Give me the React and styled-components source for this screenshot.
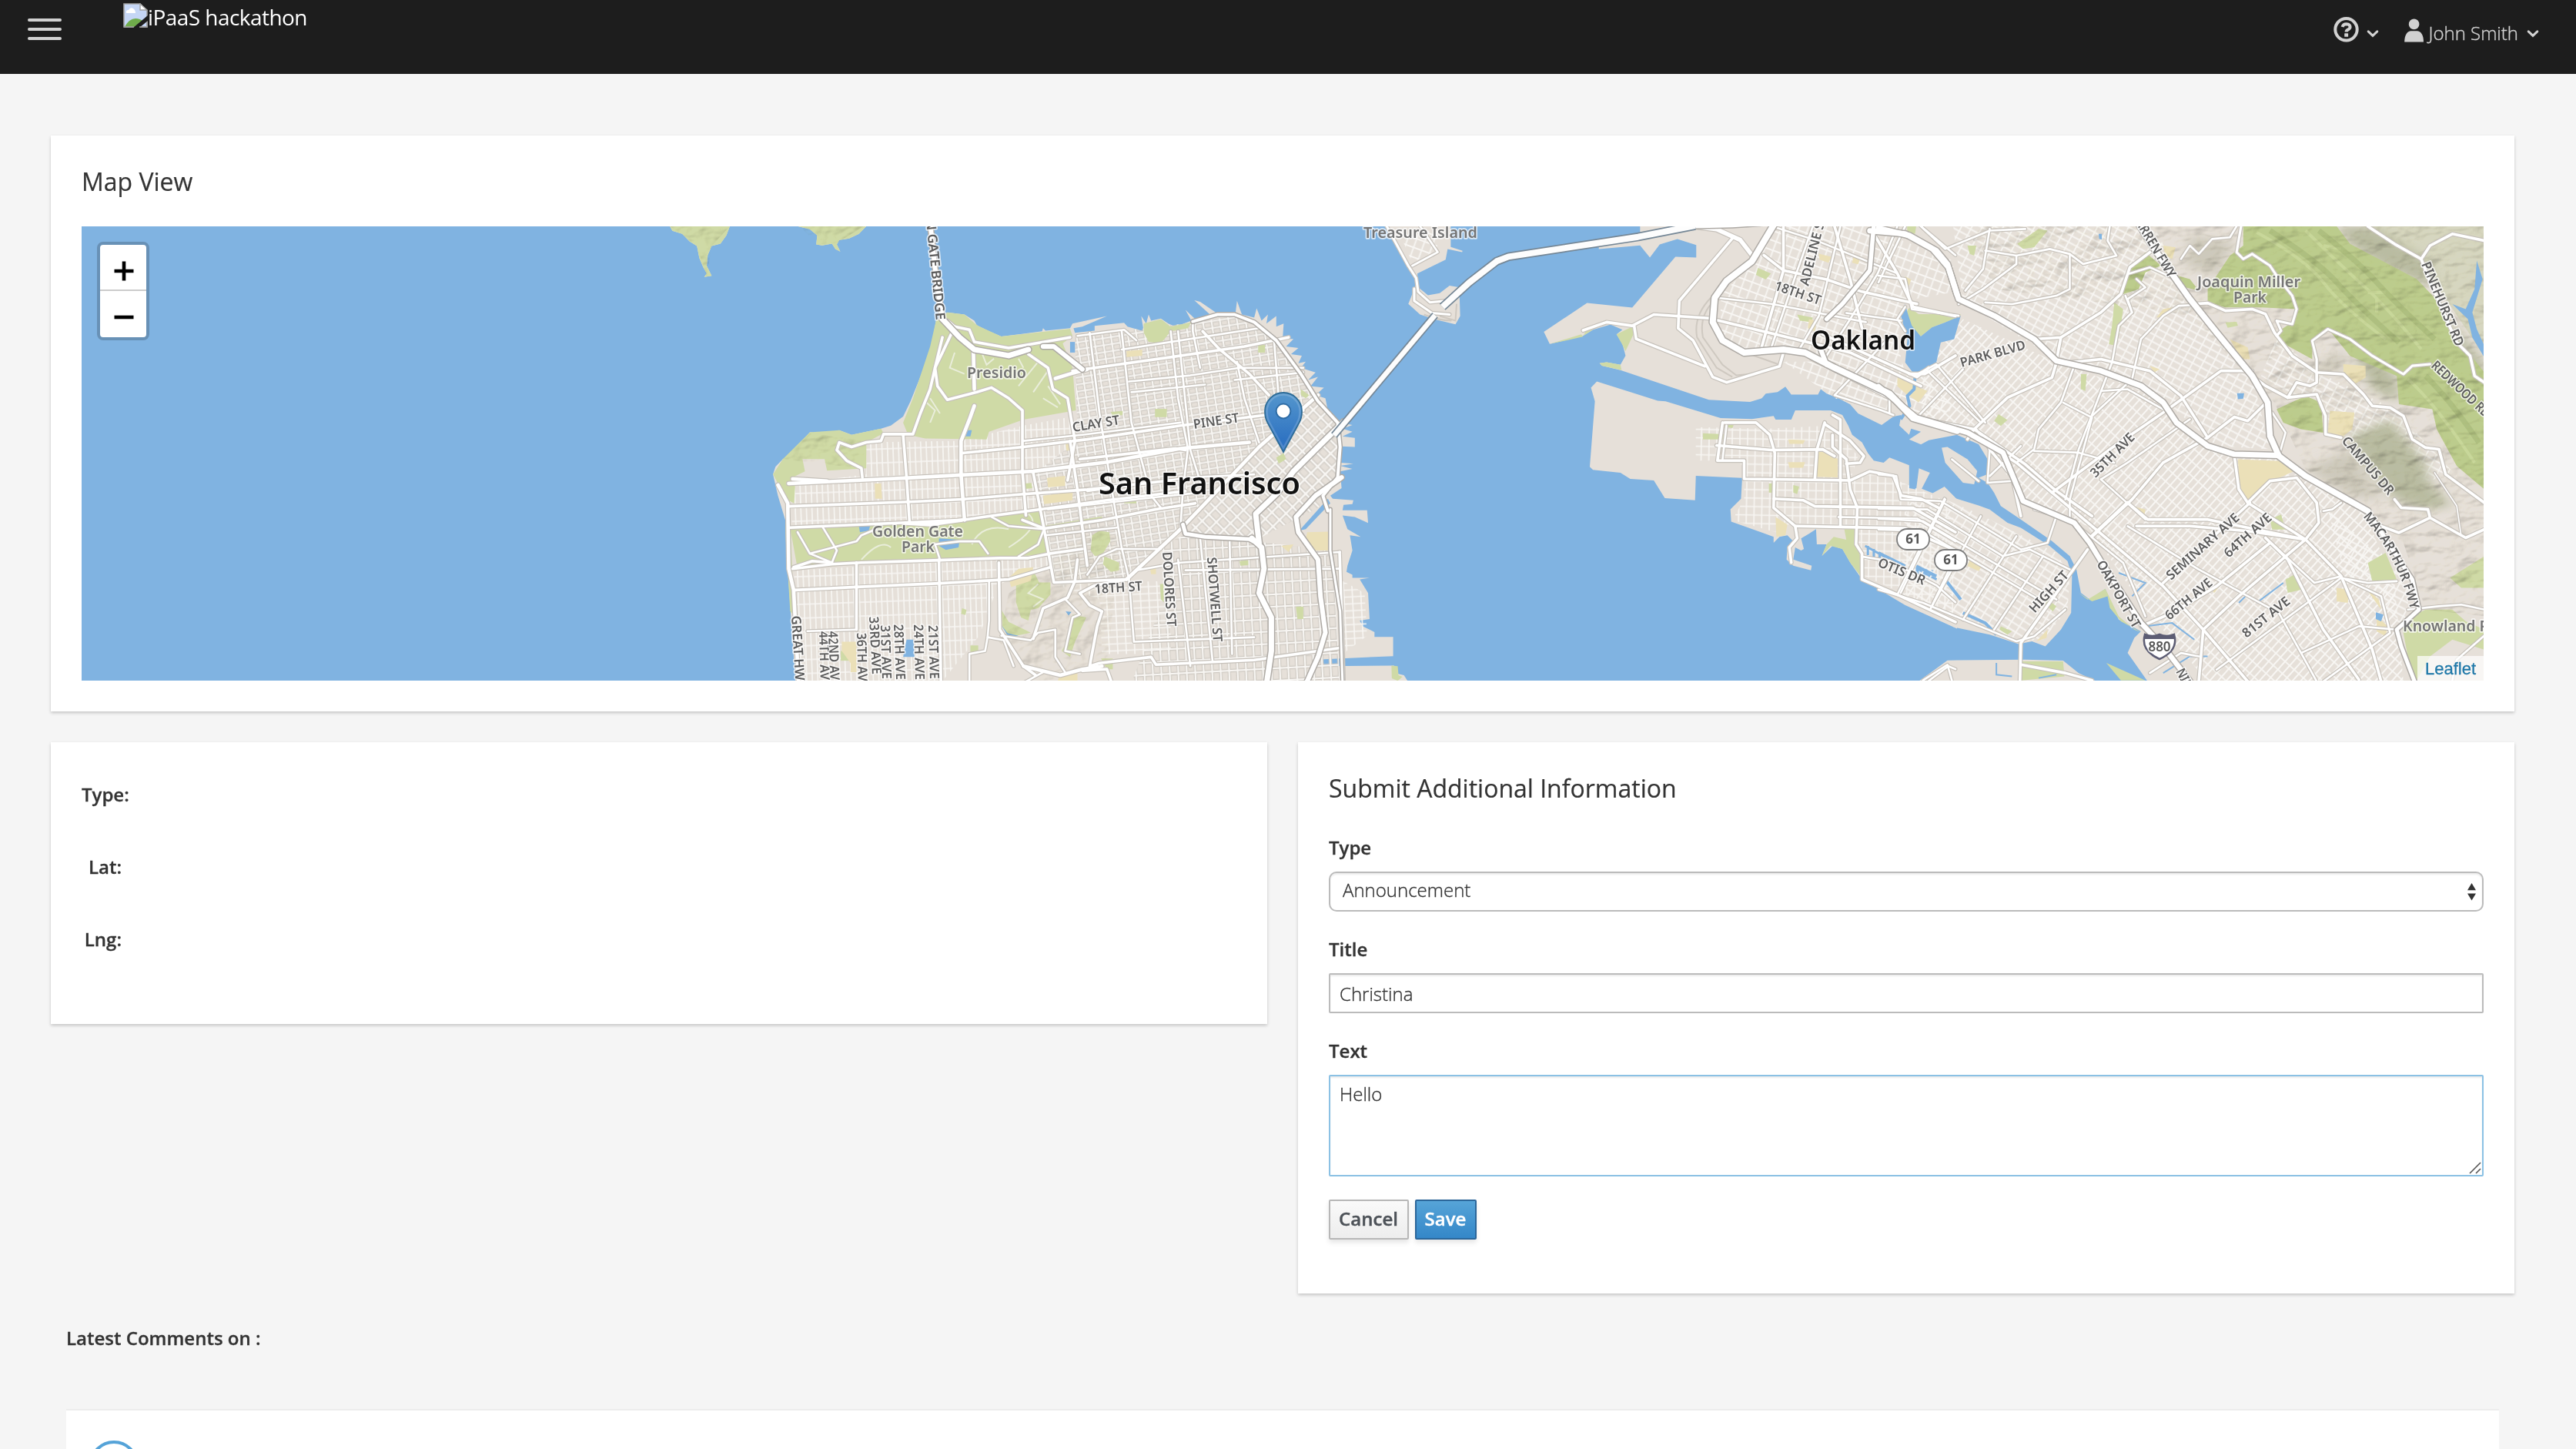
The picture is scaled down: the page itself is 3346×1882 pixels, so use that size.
import React from "react";
import styled, { createGlobalStyle, css } from "styled-components";

const GlobalStyle = createGlobalStyle`
  *, *::before, *::after { box-sizing: border-box; }
  html, body { margin: 0; padding: 0; background: #f5f5f5; overflow: hidden; }
  body { font-family: "Open Sans", "Noto Sans", sans-serif; font-size: 24px; line-height: 40px; color: #333; }
`;

/* ---------- page chrome ---------- */

const Page = styled.div`
  height: 100vh;
  overflow: hidden;
  display: flex;
  flex-direction: column;
`;

const Navbar = styled.header`
  flex: none;
  height: 96px;
  background: #1d1d1d;
  display: flex;
  align-items: flex-start;
  justify-content: space-between;
  padding: 0 48px 0 36px;
  color: #d1d1d1;
`;

const NavGroup = styled.div`
  display: flex;
  align-items: flex-start;
`;

const MenuToggle = styled.button`
  display: flex;
  flex-direction: column;
  gap: 8px;
  width: 44px;
  margin: 24px 80px 0 0;
  padding: 0;
  border: 0;
  background: none;
`;

const MenuBar = styled.span`
  height: 4px;
  border-radius: 2px;
  background: #d1d1d1;
`;

const Brand = styled.div`
  display: flex;
  align-items: flex-start;
  padding-top: 4px;
  color: #fff;
  font-size: 28px;
  line-height: 37px;
  letter-spacing: -0.55px;
`;

const HelpMenu = styled.div`
  display: flex;
  align-items: flex-start;
  padding-top: 22px;
  gap: 10px;
  margin-right: 33px;
`;

const UserMenu = styled.div`
  display: flex;
  align-items: flex-start;
  padding-top: 24px;
  font-weight: 300;
  -webkit-text-stroke: 0.35px;
`;

const UserName = styled.span`
  margin: 0 11px 0 6px;
  line-height: 38px;
`;

const ChevronIcon = styled.svg`
  margin-top: ${(p) => p.$top}px;
`;

const Content = styled.main`
  flex: none;
  display: flex;
  flex-direction: column;
  gap: 40px;
  padding: 80px 80px 0 66px;
`;

const Card = styled.section`
  background: #fff;
  border-top: 2px solid transparent;
  box-shadow: 0 2px 4px rgba(3, 3, 3, 0.2);
  padding: ${(p) => p.$pad || "38px 40px 40px"};
  height: ${(p) => p.$height}px;
`;

const CardTitle = styled.h2`
  margin: 0 0 38px;
  font-size: 32px;
  font-weight: 400;
  line-height: 40px;
  -webkit-text-stroke: 0.2px;
`;

const Columns = styled.div`
  display: grid;
  grid-template-columns: 1fr 1fr;
  gap: 40px;
  align-items: start;
`;

const Detail = styled.div`
  width: 52px;
  height: 94px;
  font-weight: 600;
  text-align: right;
  white-space: nowrap;
  -webkit-text-stroke: 0.3px;
`;

/* ---------- form ---------- */

const Field = styled.div`
  display: flex;
  flex-direction: column;
  margin-bottom: 30px;
`;

const Label = styled.label`
  font-weight: 600;
  line-height: 38px;
  margin-bottom: 12px;
  -webkit-text-stroke: 0.3px;
`;

const control = css`
  display: block;
  width: 100%;
  margin: 0;
  border: 2px solid #bbb;
  border-radius: 2px;
  background: #fff;
  color: #333;
  font: 300 24px/40px "Open Sans", "Noto Sans", sans-serif;
  -webkit-text-stroke: 0.35px;
  box-shadow: inset 0 2px 2px rgba(3, 3, 3, 0.075);
  outline: 0;
  appearance: none;
`;

const ControlWrap = styled.div`
  position: relative;
`;

const Select = styled.select`
  ${control}
  height: 52px;
  border-radius: 10px;
  padding: 2px 16px 6px;
`;

const Input = styled.input`
  ${control}
  height: 52px;
  padding: 4px 12px;
`;

const TextArea = styled.textarea`
  ${control}
  height: 132px;
  padding: 3px 12px;
  border-color: #8bc1e4;
  resize: none;
`;

const SelectArrows = styled.svg`
  position: absolute;
  right: 10px;
  top: 15px;
`;

const ResizeGrip = styled.svg`
  position: absolute;
  right: 3px;
  bottom: 3px;
`;

const Actions = styled.div`
  display: flex;
  gap: 8px;
`;

const Button = styled.button`
  height: 52px;
  width: ${(p) => p.$width}px;
  padding: 0 1px 2px 0;
  border: 2px solid ${(p) => (p.$primary ? "#2b669a" : "#b7b7b7")};
  border-radius: 2px;
  background: ${(p) =>
    p.$primary
      ? "linear-gradient(#56a4d8, #3487c8)"
      : "linear-gradient(#fafafa, #ededed)"};
  color: ${(p) => (p.$primary ? "#fff" : "#4d5258")};
  font: 600 24px/44px "Open Sans", "Noto Sans", sans-serif;
  -webkit-text-stroke: 0.4px;
  box-shadow: 0 4px 6px rgba(3, 3, 3, 0.1);
`;

/* ---------- comments ---------- */

const Comments = styled.section`
  padding: 0 20px;
  margin-top: -2px;
`;

const CommentsTitle = styled.div`
  font-weight: 600;
  line-height: 40px;
  margin-bottom: 72px;
  -webkit-text-stroke: 0.3px;
`;

const CommentList = styled.div`
  height: 160px;
  background: #fff;
  border-top: 2px solid #ededed;
  padding: 39px 30px;
`;

const Avatar = styled.div`
  width: 64px;
  height: 64px;
  border: 4px solid #55a3d8;
  border-radius: 50%;
`;

/* ---------- map ---------- */

const MapFrame = styled.div`
  position: relative;
  height: 590px;
  overflow: hidden;
  background: #80b3e1;
`;

const MapCanvas = styled.svg`
  display: block;
  width: 3120px;
  height: 590px;
`;

const ZoomControl = styled.div`
  position: absolute;
  left: 20px;
  top: 20px;
  width: 68px;
  border: 4px solid #6891b6;
  border-radius: 8px;
  background: #fff;
`;

const ZoomButton = styled.button`
  display: flex;
  align-items: center;
  justify-content: center;
  width: 60px;
  height: 60px;
  border: 0;
  border-bottom: ${(p) => (p.$first ? "2px solid #ccc" : "0")};
  padding: ${(p) => (p.$first ? "10px 0 0 2px" : "8px 0 0 2px")};
  background: none;
`;

const Attribution = styled.div`
  position: absolute;
  right: 0;
  bottom: 0;
  padding: 0 10px;
  height: 32px;
  background: rgba(255, 255, 255, 0.7);
  color: #1f78a8;
  font: 22px/33px "Liberation Sans", Arial, sans-serif;
  -webkit-text-stroke: 0.3px;
`;

const MapLabel = styled.text`
  font-family: "Noto Sans", sans-serif;
  font-size: ${(p) => p.$size || 17}px;
  font-weight: ${(p) => p.$weight || 600};
  fill: ${(p) => p.$color || "#666"};
  stroke: rgba(255, 255, 255, 0.7);
  stroke-width: 3.4px;
  stroke-linejoin: round;
  paint-order: stroke;
`;

const Shade = styled.g`
  mix-blend-mode: multiply;
  opacity: ${(p) => p.$strength};
`;

const Trace = styled.path`
  fill: none;
  vector-effect: non-scaling-stroke;
  stroke: ${(p) => p.$color};
  stroke-width: ${(p) => p.$width || 2}px;
`;

const LAND = "#e6e0d9";
const PARK = "#cfdaa6";
const SAND = "#ebe0b8";
const WATER = "#80b3e1";
const WEST = { x: 800, y: 280, sx: 1000 / 1568, sy: 620 / 1568 };
const BAY = { x: 1740, y: 280, sx: 800 / 1568, sy: 620 / 1568 };
const EAST = { x: 2440, y: 280, sx: 906 / 1568, sy: 680 / 1568 };

const Tile = ({ at, children }) => (
  <g transform={`translate(${at.x} ${at.y}) scale(${at.sx} ${at.sy})`}>{children}</g>
);

const Grid = ({ id, at, angle, w, h, line = 1.6, cased }) => {
  const d = `M0,${h / 2} H${w} M${w / 2},0 V${h}`;
  return (
    <pattern
      id={id}
      width={w}
      height={h}
      patternUnits="userSpaceOnUse"
      patternTransform={`scale(${1 / at.sx} ${1 / at.sy}) rotate(${angle})`}
    >
      {cased && <path d={d} stroke="#cfcac3" strokeWidth={line * 1.6 + 2.2} fill="none" />}
      <path d={d} stroke="#f8f6f3" strokeWidth={line * 1.6} fill="none" />
    </pattern>
  );
};

const Areas = ({ list, fill }) => list.map((d, i) => <path key={i} d={`M${d}Z`} fill={fill} />);

const landWest = [
  "110,35 115,50 135,60 150,85 165,100 170,140 178,170 185,190 180,202 195,198 185,165 187,130 195,100 213,92 225,65 232,35",
  "370,35 395,45 410,65 408,95 420,98 440,92 447,110 457,118 450,95 455,80 475,75 495,60 510,35",
  "652,345 675,318 710,325 730,345 735,360 760,380 785,397 830,388 868,380 870,370 875,378 925,370 930,355 1000,330 950,365 932,370 935,385 975,378 975,362 1035,352 1042,365 1075,380 1070,330 1080,355 1085,325 1090,345 1110,338 1125,355 1140,365 1172,345 1160,310 1180,340 1210,325 1178,278 1190,283 1225,322 1262,320 1265,280 1275,325 1300,335 1305,305 1315,345 1328,325 1325,355 1345,330 1345,365 1360,355 1358,405 1380,405 1365,430 1390,435 1375,455 1397,460 1390,485 1405,480 1395,500 1425,515 1410,540 1430,530 1415,560 1442,565 1425,590 1445,600 1450,640 1475,680 1500,688 1480,700 1500,710 1480,725 1505,730 1505,760 1478,758 1475,812 1502,815 1475,822 1500,832 1475,840 1478,895 1455,920 1460,930 1502,935 1500,948 1482,950 1480,968 1530,968 1532,1010 1505,990 1480,985 1490,1030 1517,1055 1495,1050 1500,1100 1490,1150 1488,1170 1500,1180 1500,1190 1535,1190 1515,1195 1532,1240 1535,1325 1515,1330 1522,1350 1545,1368 1545,1384 1583,1384 1583,1447 1435,1458 1445,1480 1585,1478 1592,1505 1605,1510 1615,1535 366,1535 360,1400 350,1160 345,1000 330,920 325,885 320,850 325,825 340,800 355,785 395,712 430,715 455,705 480,720 540,700 560,690 585,660 600,610 615,550 635,470 645,410",
];

const parksWest = [
  "110,35 115,50 135,60 150,85 165,100 170,140 178,170 185,190 180,202 195,198 185,165 187,130 195,100 213,92 225,65 232,35",
  "370,35 395,45 410,65 408,95 420,98 440,92 447,110 457,118 450,95 455,80 475,75 495,60 510,35",
  "652,345 675,318 710,325 735,360 785,397 925,372 930,395 910,420 930,500 937,640 830,670 760,710 755,735 630,732 595,720 585,680 605,600 640,430",
  "320,850 340,800 395,712 455,705 480,720 540,700 545,715 510,745 510,830 430,838 425,800 380,800 385,840 360,860 365,890 363,945 345,930 330,880",
  "355,1028 590,1010 760,992 862,968 872,1025 880,1115 760,1120 500,1145 370,1160",
  "870,1020 990,988 990,1000 872,1032",
  "1075,355 1110,340 1130,365 1172,350 1165,370 1130,380 1110,420 1085,415 1075,385",
  "970,1050 985,1035 1005,1040 1007,1070 990,1115 975,1118 967,1100",
  "995,1120 1025,1140 1025,1165 1008,1170 992,1145",
  "815,1200 835,1195 850,1165 862,1205 885,1205 885,1245 860,1290 845,1295 840,1330 825,1320 815,1270",
  "785,1295 800,1335 845,1370 800,1385 787,1350",
  "930,1310 958,1320 935,1400 925,1450 908,1430 925,1380",
  "345,930 356,1028 360,1200 366,1320 355,1300 345,1040",
  "1098,635 1122,635 1122,662 1098,662",
  "1035,922 1060,920 1060,945 1035,945",
  "1385,1285 1400,1285 1400,1325 1388,1325",
  "832,880 846,878 848,895 834,898",
  "1308,425 1322,425 1322,450 1308,450",
  "1345,795 1360,780 1365,800 1350,815",
  "1395,570 1412,590 1405,600 1395,590",
  "458,1430 482,1430 482,1462 458,1462",
  "705,1290 714,1295 712,1312 703,1308",
  "722,1412 738,1412 738,1435 722,1435",
  "988,1455 1012,1455 1012,1490 1000,1490",
  "1008,645 1032,642 1032,655 1012,660",
  "1270,1135 1288,1132 1288,1148 1272,1150",
  "1108,1210 1115,1210 1116,1270 1110,1260",
];

const sandWest = [
  "527,880 540,880 542,930 528,930",
  "915,740 932,738 935,770 918,772",
  "878,862 915,855 915,888 880,893",
  "870,920 930,908 930,935 872,948",
  "1408,1040 1455,1038 1455,1100 1420,1100 1405,1060",
  "1355,1085 1380,1080 1370,1105",
  "820,1160 850,1155 845,1200 805,1220 800,1190",
  "460,1400 490,1400 490,1500 478,1500 478,1470 460,1430",
  "905,1505 940,1495 940,1528 900,1528",
  "1040,445 1072,440 1072,460 1040,465",
  "1088,1158 1100,1158 1100,1178 1090,1178",
];

const waterWest = [
  "495,1020 518,1018 515,1035 497,1040",
  "592,1393 606,1393 608,1450 585,1450",
  "658,1060 700,1065 698,1090 672,1098 658,1085",
  "1400,1020 1450,930 1455,945 1405,1030 1392,1035",
  "785,1345 800,1385 820,1380 798,1372",
  "925,415 935,415 935,450 925,450",
  "712,705 725,705 722,725 710,725",
  "916,1300 928,1302 922,1314",
];

const landBay = [
  "120,35 145,100 175,165 195,205 192,235 175,290 205,325 240,340 295,357 307,330 305,250 325,240 280,230 255,255 225,262 200,235 198,190 270,145 275,110 312,120 313,116 283,103 283,35",
  "765,35 765,70 660,100 660,110 765,98 790,138 815,95 860,77 908,97 908,138 855,135 745,302 630,287 520,382 535,422 620,395 645,375 690,358 720,375 705,390 720,420 728,460 715,490 680,482 662,485 668,493 715,508 940,605 1045,612 1075,600 1085,585 1115,580 1135,562 1150,588 1218,588 1225,570 1240,585 1270,600 1300,620 1320,650 1380,688 1410,660 1430,655 1425,690 1450,720 1455,700 1480,710 1450,735 1480,752 1500,738 1572,720 1572,35",
  "655,545 640,565 650,610 637,825 645,835 715,845 740,865 800,870 828,928 905,935 907,855 1025,862 1022,930 995,965 997,1005 1105,1055 1105,1075 1120,1055 1140,1050 1155,1070 1140,1090 1138,1130 1155,1150 1200,1165 1202,1150 1155,1130 1160,1090 1175,1100 1182,1095 1175,1060 1195,1045 1213,1030 1215,1080 1240,1080 1228,1118 1255,1085 1280,1095 1300,1140 1330,1195 1440,1280 1572,1357 1572,932 1540,890 1510,912 1482,897 1503,845 1475,830 1468,900 1450,895 1450,820 1400,795 1385,812 1360,805 1345,780 1330,745 1305,720 1295,690 1280,655 1250,640 1160,640 1150,670 1110,670 1105,658 1050,668 970,665 830,610 810,608",
];

const parksBay = [
  "705,390 745,365 748,390 728,445 718,420",
  "662,485 680,482 715,490 718,508 668,493",
  "620,395 645,375 630,373",
  "535,422 620,398 615,390",
  "1065,172 1098,190 1085,210 1060,195",
  "1165,325 1205,335 1200,350 1172,345",
  "925,715 978,718 978,735 925,735",
  "980,680 1005,682 1000,698 985,695",
  "1285,1030 1312,1030 1325,1120 1330,1190 1300,1140 1280,1095 1250,1085 1228,1118 1240,1080 1258,1055 1290,1065",
  "1155,885 1170,890 1165,915 1155,910",
  "1093,880 1103,880 1103,910 1093,910",
  "132,1478 148,1480 150,1510 160,1515 148,1528 133,1520",
  "1445,35 1468,35 1465,60 1445,55",
];

const sandBay = [
  "1215,775 1245,778 1268,800 1268,860 1215,858 1212,820",
  "1110,990 1140,1015 1135,1050 1112,1055",
  "1142,735 1185,738 1180,750 1145,750",
  "1142,810 1185,810 1180,828 1145,828",
  "1220,125 1252,135 1245,155 1222,145",
  "1420,530 1465,560 1450,595 1420,560",
  "1195,340 1215,345 1210,380 1192,370",
  "1308,135 1325,145 1320,160 1305,155",
  "1440,200 1455,210 1450,230 1438,215",
];

const landEast = [
  "168,32 1362,32 1362,1395 605,1395 560,1310 575,1265 590,1245 540,1210 520,1150 510,1118 475,1150 455,1130 445,1060 430,1020 390,975 320,910 275,870 260,830 245,800 225,785 245,775 250,740 225,685 168,652",
  "168,1232 250,1255 315,1283 345,1275 375,1290 410,1240 433,1190 435,1080 425,1035 385,990 320,935 290,920 250,880 225,868 168,845",
  "142,695 155,693 200,730 222,765 215,805 190,800 150,740",
  "90,1395 155,1332 330,1330 415,1333 450,1370 490,1395",
];

const hillParks = [
  "820,32 1030,32 1060,85 1210,190 1260,260 1290,350 1362,470 1362,820 1300,750 1255,640 1245,580 1170,565 1165,480 1060,420 1010,338 975,370 975,430 920,390 895,350 930,320 940,280 860,275 780,275 740,260 740,220 790,120 820,90",
  "600,110 635,150 600,170 585,220 540,240 560,160",
  "645,170 700,190 720,225 690,215",
  "895,580 960,540 995,560 1000,650 950,640 910,620",
];

const parksEast = [
  "70,275 90,295 185,295 180,305 120,335 95,362 72,330 62,290",
  "530,260 550,280 545,330 535,390 518,385 525,330",
  "1175,1215 1230,1180 1290,1180 1320,1215 1362,1240 1362,1300 1290,1270 1240,1320 1210,1392 1190,1320",
  "1285,1085 1362,1020 1362,1115 1310,1115",
  "1100,1040 1140,1010 1165,1090 1110,1095",
  "320,1335 415,1335 418,1380 322,1392",
  "450,1130 470,1150 510,1118 540,1200 575,1240 590,1248 545,1215 520,1175 515,1140 480,1155",
  "512,1340 600,1392 545,1392",
  "270,595 290,612 275,630 260,615",
  "915,1090 935,1075 952,1120 920,1130",
  "880,910 905,895 915,940 885,940",
  "312,85 360,40 380,45 350,95 325,100",
  "200,90 220,90 215,120 205,115",
  "380,1150 400,1170 392,1185 375,1165",
  "275,1230 300,1245 290,1255 272,1240",
  "455,475 468,475 465,525 455,520",
  "780,320 805,318 808,330 785,336",
];

const sandEast = [
  "808,730 900,735 935,765 885,795 835,855 812,830",
  "790,370 830,395 835,430 815,430",
  "1045,445 1095,450 1095,485 1070,505 1045,475",
  "1015,585 1070,590 1065,640 1040,665 1010,650",
  "45,490 110,525 90,560 60,530",
  "640,90 668,95 660,130 645,120",
  "1030,1115 1058,1120 1055,1160 1030,1155",
  "1095,1115 1125,1150 1130,1180",
  "205,1030 235,1045 225,1065 200,1050",
  "640,280 660,275 640,305 625,305",
  "610,450 632,460 620,470",
  "1120,1200 1145,1230 1140,1260 1120,1245",
  "570,870 600,880 598,895",
  "745,1115 770,1105 755,1130",
  "355,1275 380,1240 378,1265",
];

const brushEast = [
  "1030,32 1110,32 1230,130 1250,200 1230,210 1130,150 1060,85",
  "1060,660 1150,610 1200,690 1230,740 1240,800 1290,870 1230,880 1160,850 1080,720",
  "1070,420 1110,420 1165,480 1170,560 1110,520",
  "1255,250 1300,340 1362,440 1362,500 1310,430",
];

const waterEast = [
  "60,265 50,300 65,370 60,440 80,475 130,440 140,380 170,370 185,300 150,320 120,335 95,362 75,330 65,290",
  "806,532 822,532 820,548 808,550",
  "1118,1188 1135,1195 1130,1215 1118,1208",
  "495,55 502,55 502,72 496,70",
  "1290,265 1320,280 1340,220 1345,135 1358,190 1335,290 1345,340 1362,390 1362,425 1335,365 1325,310",
];

/* Roads: [path, width] */
const roadsWest = [
  ["675,345 690,365 665,450 650,500 655,560 675,605 735,580 765,565 800,600 828,640 828,840 835,985", 4],
  ["690,365 720,375 730,415 800,435 925,400", 4],
  ["728,440 730,570", 5],
  ["730,625 720,670 703,740 703,850 710,1000", 5],
  ["840,455 880,500 890,570 920,600 935,740 920,870", 4],
  ["895,535 925,520 960,505", 5],
  ["665,400 650,500 640,570 620,650 605,718 545,718 540,740 510,745 480,760 455,745 450,770 470,805 500,830 502,860", 4],
  ["585,720 592,860 598,1005", 4],
  ["352,880 420,875 590,862 705,852 850,840 1000,810 1150,765 1290,745", 5],
  ["360,865 430,872", 5],
  ["352,955 600,940 705,932 830,915 960,900 1130,870", 4],
  ["355,1025 600,1008 705,1000 770,985 865,965 1000,935 1160,905", 4],
  ["330,885 350,945 352,1160 362,1230 372,1535", 5],
  ["360,1160 440,1145 500,1140 660,1132 780,1125 840,1125 885,1110 950,1095", 4],
  ["362,1155 400,1135 440,1140", 4],
  ["365,1230 490,1220 660,1208 800,1195 885,1155", 4],
  ["390,1365 490,1360", 3],
  ["490,1140 490,1360", 4],
  ["658,1130 662,1535", 4],
  ["760,1200 760,1330 757,1385 790,1395 810,1480", 3],
  ["757,1385 752,1430 720,1440 720,1535", 3],
  ["780,1140 782,1360 830,1480 855,1510", 4],
  ["870,1500 830,1535", 3],
  ["830,1480 905,1510 950,1490 990,1480", 5],
  ["705,780 830,760 960,735 1150,690 1400,640", 4],
  ["830,740 950,720 1150,680", 3],
  ["828,1000 872,1028 990,1000 1100,965 1180,945", 4],
  ["850,845 872,1028 892,1205 1040,1195", 4],
  ["765,990 800,1020 872,1030 860,1080 820,1120", 3],
  ["660,1130 650,1080 700,1070 740,1070 758,1110", 3],
  ["590,1010 640,1015 705,1000", 5],
  ["370,1040 395,1110 440,1140", 3],
  ["420,1020 450,1100 440,1140", 3],
  ["395,1110 490,1070 500,1050 530,1030", 3],
  ["1040,1195 1150,1030 1310,760 1430,590", 5],
  ["925,740 940,900 960,1150", 4],
  ["965,385 985,650 1010,900 1030,1090 1045,1195 1055,1400 1300,1385", 3],
  ["1030,378 1050,680 1090,920 1110,960", 3],
  ["1130,380 1145,600 1165,765 1155,900 1150,1020", 3],
  ["1145,380 1170,770 1195,900", 3],
  ["1195,380 1230,440 1290,520 1330,590", 4],
  ["1175,348 1175,380 1190,500", 3],
  ["930,510 1130,465 1280,430 1370,400", 4],
  ["1030,440 1130,415 1310,370", 3],
  ["940,395 1035,375 1060,410", 3],
  ["1045,545 1170,525 1270,500 1400,500", 3],
  ["1050,580 1200,555", 3],
  ["1260,540 1400,515", 3],
  ["1265,480 1280,600 1310,745", 3],
  ["1340,400 1350,600", 3],
  ["945,800 1140,765 1160,770", 4],
  ["875,1050 1020,1025", 3],
  ["960,905 1170,860 1300,850", 3],
  ["880,965 1100,925 1190,910", 3],
  ["960,1180 985,1120 1020,1095 1110,1095", 3],
  ["1040,1195 975,1215 945,1240 965,1280 990,1300 980,1350 965,1480 985,1470 1090,1450 1100,1475 1300,1460 1475,1420", 4],
  ["850,1390 870,1290 920,1255 935,1200 940,1130", 4],
  ["785,1380 845,1395 860,1370 895,1360 895,1450 915,1500", 3],
  ["915,1260 945,1310 930,1320 915,1430 945,1440", 3],
  ["950,1495 1000,1490 1010,1535", 4],
  ["1145,1130 1170,1480", 3],
  ["1190,1060 1215,1460", 3],
  ["1250,1070 1255,1440", 3],
  ["1060,1165 1150,1140 1475,1105", 3],
  ["1160,1165 1475,1160", 3],
];
const freewaysWest = [
  ["640,25 652,200 665,340", 6],
  ["665,340 700,400 730,440 800,460 840,440", 7],
  ["870,430 892,430 950,505", 6],
  ["1155,1015 1160,1045 1200,1055 1290,1063 1310,1080", 5],
  ["1295,1060 1315,1090 1320,1160 1310,1240 1335,1320 1335,1430 1325,1540", 7],
  ["1310,1075 1303,980 1345,915 1380,840 1430,760 1482,678", 7],
  ["1478,860 1425,920 1385,990 1390,1040 1430,1130 1435,1250 1445,1370 1430,1450 1405,1540", 6],
  ["1175,348 1225,325 1260,325 1300,350 1345,410 1395,520 1430,610 1470,680 1475,760 1470,860 1440,920 1450,970", 4],
  ["1455,965 1455,1100 1475,1300 1480,1535", 3],
];
const roadsBay = [
  ["120,35 175,165 195,205 200,250 230,285 270,280", 3.5],
  ["190,240 190,280 235,320 280,325", 3.5],
  ["205,35 250,120 185,165", 3],
  ["1000,75 865,280 862,370 900,410 950,530 985,548 1120,495 1130,450", 4],
  ["620,377 680,350 745,362 800,325 940,337 1110,390 1300,450 1480,560", 4],
  ["750,362 755,405 930,495", 4],
  ["900,35 960,45 1020,80 1050,130", 6],
  ["1130,35 1130,180 1075,430", 4],
  ["1080,130 1130,180 1240,210 1330,250 1470,290", 4],
  ["1205,35 1160,200 1100,430", 3],
  ["1260,35 1300,210 1330,370", 4],
  ["1275,35 1220,330 1170,440", 3],
  ["960,270 1100,290 1340,350", 3],
  ["1100,35 1210,80 1420,190", 3],
  ["1420,35 1370,190 1300,340 1240,460", 3],
  ["1360,60 1420,190 1460,300 1568,330", 4],
  ["1440,300 1420,340 1440,380", 3],
  ["1230,390 1470,530 1500,500", 4],
  ["1200,470 1400,600 1400,650", 3],
  ["1400,400 1260,590 1380,640 1410,655", 3],
  ["1480,35 1568,130", 3],
  ["1290,320 1430,345", 3],
  ["1450,520 1490,520 1568,460", 4],
  ["980,680 1060,680 1095,720 1108,780 1105,960 1160,1020 1165,1060 1145,1090 1150,1140", 4],
  ["975,680 962,805 1030,805 1030,865 1300,870 1350,840 1410,855 1430,920 1480,930 1525,960", 4],
  ["985,690 975,800", 3],
  ["960,755 1100,770 1230,768 1260,790", 4],
  ["1105,930 1180,935 1210,955 1460,960 1568,1040", 4],
  ["1160,1020 1440,1027 1568,1100", 4],
  ["1255,655 1275,670 1275,1020", 4],
  ["1235,680 1215,770 1210,865", 4],
  ["1235,685 1300,740 1335,790 1325,812 1290,815", 4],
  ["1255,720 1255,760 1290,800 1300,900 1318,960 1315,1080 1330,1110 1330,1195 1420,1245 1568,1335", 4],
  ["1270,990 1470,995 1568,1070", 3],
  ["1330,1120 1400,1135 1520,1215 1568,1270", 3],
  ["1540,930 1420,1245", 3],
  ["1568,1120 1505,1290", 3],
  ["0,1105 5,1300 10,1535", 4],
  ["1500,1528 1550,1480 1568,1490", 3],
];
const freewaysBay = [
  ["900,33 1000,30 1110,20", 7],
  ["1108,25 1050,150 985,215 955,270 950,350 975,410 1030,450 1130,440 1185,450 1260,500 1400,585 1460,665 1572,707", 8],
  ["1350,50 1440,60 1510,110 1550,170 1572,260", 7],
  ["1360,35 1350,180 1280,290 1240,340", 5.5],
  ["1225,440 1240,490", 6],
];
const bridges = [
  ["-14,722 243,327", 6.5],
  ["262,300 330,220 400,150 430,135 760,70 905,33", 8],
];
const roadsEast = [
  ["95,32 150,100 250,45 330,40", 3],
  ["250,40 235,160 195,225", 3],
  ["180,265 235,220 310,145 310,120 240,105", 3],
  ["310,120 385,100 430,115 430,220 400,240 300,265 240,260", 3],
  ["520,32 515,75 535,120 460,145 430,115", 3],
  ["620,100 565,155 545,235 500,290 410,365 350,370", 4],
  ["410,365 400,435", 4],
  ["555,240 570,290 540,330 525,440 450,700 420,850", 3],
  ["560,175 610,155 660,185", 3],
  ["580,190 600,215 560,250 570,290", 3],
  ["400,440 390,485 290,545 215,640 200,670", 4],
  ["440,450 410,560 360,640 350,700 310,740", 3],
  ["350,705 450,710 530,740", 3],
  ["415,560 480,605 430,850 430,910", 3],
  ["705,268 675,270 640,300 590,370 570,490 480,600", 3],
  ["430,440 500,430 610,465 680,540 740,665", 4],
  ["500,525 560,520 640,580", 3],
  ["840,465 770,465 640,590 520,700 390,830", 4],
  ["868,565 830,615 800,603 740,665 640,740 570,850 480,960", 4],
  ["700,610 560,740 500,790", 3],
  ["560,860 605,910 740,910 960,970", 4],
  ["580,930 700,930 830,945 960,970", 4],
  ["1040,860 1020,880 1000,885", 3],
  ["830,860 880,795 940,785 985,860 990,920 960,970", 4],
  ["800,720 810,820 830,860 960,970 1040,1080 1110,1300 1130,1395", 4],
  ["870,965 980,1100 1040,1080", 3],
  ["960,970 810,1140 730,1240 720,1395", 4],
  ["835,860 640,1100", 4],
  ["200,645 310,740 480,930 640,1110 730,1240 830,1395", 4],
  ["85,605 215,640 330,745 400,825 480,900", 4],
  ["250,700 300,780 320,900", 4],
  ["220,640 250,700 245,800 300,795", 3],
  ["350,880 430,910 550,1040 600,1200", 3],
  ["320,690 250,780", 3],
  ["500,790 600,910", 3],
  ["480,960 560,860", 5],
  ["470,1000 320,1280 318,1395", 4],
  ["560,930 720,1060 900,1190 950,1310 985,1395", 3],
  ["870,965 920,1030 1000,1240 1080,1390", 4],
  ["590,1230 660,1190 760,1110 880,980", 4],
  ["1040,1085 760,1360", 3],
  ["950,1310 1080,1230 1165,1240", 3],
  ["610,1370 680,1310 720,1320", 3],
  ["1040,1085 1100,1100 1165,1095", 3],
  ["1050,1090 1130,1140 1150,1250 1000,1395", 3],
  ["1190,1180 1260,1170 1310,1165 1362,1180", 3],
  ["705,265 740,262 780,285 840,280 870,295 890,350 930,420 985,470 1045,475 1090,535 1110,570 1150,575 1180,600 1200,670 1230,695 1260,700 1275,775 1362,860", 4],
  ["985,470 985,430 975,375 1010,340 1060,370 1110,420 1180,475 1200,450 1240,445", 3.5],
  ["815,32 805,110 820,130 840,115 880,150 900,190 930,240 940,280 930,325 895,315 905,345 895,360", 3.5],
  ["680,130 700,90 720,115 750,70 790,65 805,32", 3],
  ["840,480 870,510 920,545 940,500 970,510 985,500 985,470", 4],
  ["920,545 985,535 1005,600 1005,655 1040,665", 4],
  ["1100,32 1160,85 1220,130 1240,90 1290,55 1362,75", 4],
  ["1220,130 1240,200 1300,380 1330,420 1340,480 1362,500", 4],
  ["1160,850 1175,875 1235,880 1240,905 1170,950 1130,930", 4],
  ["1240,905 1320,965 1362,940", 4],
  ["1250,770 1300,870 1310,960", 2],
  ["885,590 915,650 900,720", 3],
  ["0,775 40,780 50,850 140,855 320,1000 380,980 400,900", 3],
  ["0,878 110,880 280,1020 340,1000 430,1060", 3],
  ["0,908 100,915 400,1150", 3],
  ["0,940 100,945 360,1150", 3],
  ["0,1120 100,1160 310,1275 350,1260 420,1180", 3],
  ["150,850 50,1130", 3],
  ["230,900 120,1170", 3],
  ["310,960 190,1210", 3],
  ["370,1020 260,1240", 3],
  ["320,1345 420,1370 480,1392", 4],
  ["100,1392 155,1345 165,1392", 3],
  ["80,480 130,445 240,620", 3],
  ["0,180 60,190 75,280 180,300", 3],
  ["110,465 230,620", 3],
  ["60,32 0,200", 3],
  ["190,460 90,600", 3],
  ["165,730 225,795", 3],
  ["1360,1260 1300,1330 1290,1392", 3],
];
const freewaysEast = [
  ["0,38 70,60 130,105 155,145 180,250 260,300 350,370 400,435 500,465 590,510 640,560 670,620 740,690 800,715 900,718", 7],
  ["585,25 620,100 700,250 760,350 840,480 875,560 880,660 900,720 960,780 1100,885", 7.5],
  ["1100,885 1150,990 1200,1090 1215,1180 1165,1240 1175,1290 1205,1395", 5],
  ["0,512 85,605 200,650 280,710 305,790 325,855 440,920 475,980 500,1035 590,1220 640,1290 700,1395", 6.5],
];

const Roads = ({ list, color, extra }) =>
  list.map(([d, w], i) => (
    <polyline key={i} points={d} stroke={color} strokeWidth={w + extra} vectorEffect="non-scaling-stroke" />
  ));

const tiles = [
  { at: WEST, roads: roadsWest, freeways: freewaysWest },
  { at: BAY, roads: roadsBay, freeways: freewaysBay },
  { at: EAST, roads: roadsEast, freeways: freewaysEast },
];

/* Street labels: [text, x1, y1, x2, y2] along the baseline */
const streets = [
  ["CLAY ST", 1394, 561, 1455, 551],
  ["PINE ST", 1551, 557, 1610, 548],
  ["18TH ST", 1422, 771, 1484, 767],
  ["DOLORES ST", 1510, 717, 1516, 814],
  ["SHOTWELL ST", 1568, 724, 1576, 834],
  ["GREAT HWY", 1028, 800, 1034, 894],
  ["44TH AVE", 1064, 820, 1066, 892],
  ["42ND AVE", 1076, 820, 1079, 892],
  ["36TH AVE", 1113, 822, 1115, 894],
  ["33RD AVE", 1129, 801, 1133, 876],
  ["31ST AVE", 1144, 812, 1146, 882],
  ["28TH AVE", 1161, 811, 1164, 883],
  ["24TH AVE", 1187, 811, 1189, 883],
  ["21ST AVE", 1206, 812, 1208, 882],
  ["EN GATE BRIDGE", 1202, 276, 1216, 416],
  ["18TH ST", 2304, 376, 2363, 396],
  ["ADELINE ST", 2349, 372, 2372, 281],
  ["PARK BLVD", 2548, 477, 2632, 453],
  ["35TH AVE", 2722, 621, 2774, 569],
  ["SEMINARY AVE", 2820, 754, 2910, 674],
  ["64TH AVE", 2895, 725, 2952, 674],
  ["66TH AVE", 2818, 806, 2875, 759],
  ["81ST AVE", 2918, 829, 2976, 783],
  ["HIGH ST", 2643, 797, 2688, 748],
  ["OAKPORT ST", 2723, 732, 2771, 817],
  ["CAMPUS DR", 3041, 573, 3102, 644],
  ["REDWOOD RD", 3157, 476, 3228, 543],
  ["PINEHURST RD", 3145, 343, 3190, 451],
  ["WARREN FWY", 2766, 276, 2817, 362],
  ["OTIS DR", 2438, 735, 2498, 760],
  ["NIMITZ", 2826, 872, 2850, 918],
];

const Street = ({ text, x1, y1, x2, y2 }) => {
  const angle = (Math.atan2(y2 - y1, x2 - x1) * 180) / Math.PI;
  return (
    <MapLabel
      $color="#5c5c5c"
      textLength={Math.hypot(x2 - x1, y2 - y1)}
      lengthAdjust="spacingAndGlyphs"
      transform={`translate(${x1} ${y1}) rotate(${angle})`}
    >
      {text}
    </MapLabel>
  );
};

const places = [
  ["Presidio", 1256, 491, 77, 20],
  ["Golden Gate", 1133, 697, 118, 20],
  ["Park", 1171, 717, 43, 20],
  ["Treasure Island", 1771, 309, 148, 20],
  ["Joaquin Miller", 2854, 373, 134, 20],
  ["Park", 2901, 393, 43, 20],
  ["Knowland Park", 3121, 820, 143, 20],
];

const RouteShield = ({ x, y }) => (
  <g>
    <rect x={x - 21} y={y - 13} width="42" height="27" rx="13" fill="#fff" stroke="#7c7c7c" strokeWidth="1.8" />
    <MapLabel $color="#555" $weight={700} $size={17} x={x} y={y + 6} textAnchor="middle">61</MapLabel>
  </g>
);

const Relief = ({ id, frequency, seed, scale }) => (
  <filter id={id} x="0" y="0" width="1" height="1">
    <feTurbulence type="fractalNoise" baseFrequency={frequency} numOctaves="3" seed={seed} />
    <feColorMatrix values="0 0 0 0 0  0 0 0 0 0  0 0 0 0 0  1 0 0 0 0" />
    <feDiffuseLighting surfaceScale={scale} diffuseConstant="1.16" lightingColor="#fffefa">
      <feDistantLight azimuth="225" elevation="60" />
    </feDiffuseLighting>
  </filter>
);

const CityMap = () => (
  <MapCanvas viewBox="106 294 3120 590">
    <defs>
      <Grid id="avenues" at={WEST} angle={-2} w={7.2} h={18} line={1} />
      <Grid id="downtown" at={WEST} angle={-9} w={11} h={9} line={1.3} cased />
      <Grid id="soma" at={WEST} angle={45} w={14} h={12} line={1.7} cased />
      <Grid id="mission" at={WEST} angle={-3} w={11} h={16} line={1.3} cased />
      <Grid id="castro" at={WEST} angle={-3} w={11} h={9} line={1} />
      <Grid id="oakland" at={BAY} angle={20} w={11} h={12} line={1.1} />
      <Grid id="alameda" at={BAY} angle={1} w={10} h={11} line={1} />
      <Grid id="flats" at={EAST} angle={-48} w={14} h={8} line={1.1} />
      <Grid id="upland" at={EAST} angle={28} w={12} h={9} line={1.1} />
      <Grid id="isle" at={EAST} angle={32} w={12} h={9} line={1.1} />
      <Relief id="relief" frequency="0.016 0.022" seed="11" scale="9" />
      <Relief id="reliefSoft" frequency="0.02" seed="5" scale="7" />
      <clipPath id="hills">
        <path d="M560,32 H1362 V1200 L1230,1180 1180,980 960,760 890,560 830,480 700,300 500,260 260,220 200,32Z" />
      </clipPath>
      <clipPath id="peaks">
        <path d="M800,1240 L880,1160 960,1020 1035,1060 1020,1180 1000,1480 860,1535 780,1400Z M340,800 395,715 510,740 500,830Z M110,35 232,35 195,100 185,200 165,100Z M375,35 505,35 450,90 410,95Z" />
      </clipPath>
      <filter id="haze"><feGaussianBlur stdDeviation="14" /></filter>
      <linearGradient id="pin" x1="0" y1="0" x2="0" y2="1">
        <stop offset="0" stopColor="#5597cd" />
        <stop offset="0.8" stopColor="#2f73c2" />
      </linearGradient>
      <path id="macarthur" d="M3069,671 Q3116,725 3131,792" />
    </defs>

    <rect x="106" y="294" width="3120" height="590" fill={WATER} />

    <Tile at={WEST}>
      <Areas list={landWest} fill={LAND} />
      <path fill="url(#avenues)" d="M510,745 L700,740 830,690 930,660 945,740 850,850 872,1010 360,1020 352,950 365,880 510,850Z M362,1165 L660,1138 880,1118 890,1160 780,1210 740,1380 662,1535 375,1535Z" />
      <path fill="url(#downtown)" d="M935,400 L1035,378 1175,352 1260,330 1345,410 1420,590 1310,760 1150,1025 1040,1190 890,1200 870,1010 850,850 940,740Z" />
      <path fill="url(#soma)" d="M1420,590 L1470,690 1472,870 1430,960 1310,1060 1160,1040 1310,760Z" />
      <path fill="url(#mission)" d="M1110,1090 L1160,1045 1300,1070 1460,1100 1475,1535 1050,1535 1130,1200Z" />
      <path fill="url(#castro)" d="M890,1210 L1130,1200 1130,1440 990,1440 985,1260Z M1480,1200 1525,1240 1530,1380 1480,1440Z" />
      <Areas list={parksWest} fill={PARK} />
      <Areas list={sandWest} fill={SAND} />
      <Areas list={waterWest} fill={WATER} />
      <path d="M790,1400 L850,1400 895,1375 900,1490 830,1470Z" fill={LAND} />
      <Trace $color="#e9edda" d="M630,610 L650,640 640,680 M640,600 660,650 M690,450 680,500 710,520 M820,560 L860,480 M850,580 L880,510 M870,600 900,630 M880,560 905,620 M745,450 L755,490 770,470 M820,470 L830,500 M725,1080 Q745,1010 800,1030 M840,980 Q870,1020 800,1090 M500,1130 Q540,1060 560,1090 M860,1210 L840,1240 870,1260 850,1285" />
    </Tile>

    <Tile at={BAY}>
      <Areas list={landBay} fill={LAND} />
      <path fill="url(#oakland)" d="M1060,150 L1110,35 1340,35 1568,150 1568,250 1440,280 1420,420 1440,520 1490,530 1568,640 1470,660 1270,500 1190,445 1030,440 970,390 970,260Z M1130,480 1200,480 1400,600 1390,650 1260,600Z M150,50 L260,50 245,115 185,155Z" />
      <path fill="url(#alameda)" d="M907,695 L1090,700 1250,690 1320,790 1300,870 1350,850 1420,870 1568,950 1568,1320 1330,1180 1310,1025 1150,1010 1110,1040 1000,1000 1030,930 1030,870 1020,805 907,805Z" />
      <Areas list={parksBay} fill={PARK} />
      <Areas list={sandBay} fill={SAND} />
      <Trace $color="#cfc9c1" d="M945,270 Q900,330 910,400 L960,500 1000,530 M950,285 Q915,330 925,400 L975,490 1010,525 1050,520 M990,430 1120,490 M255,330 295,345 298,290 M215,325 Q250,345 285,345" />
      <Trace $color={WATER} $width={3} d="M1338,1085 L1450,1165 M1345,1085 V1115 M1360,1095 V1125 M1375,1105 V1130 M1390,1115 V1140 M1405,1125 V1145 M1465,1160 L1520,1195 M1480,1160 L1470,1180 M1495,1160 L1485,1188 M1510,1165 L1500,1195" />
    </Tile>

    <Tile at={EAST}>
      <Areas list={landEast} fill={LAND} />
      <path fill="url(#isle)" d="M60,860 L150,850 220,890 400,1010 430,1080 425,1180 370,1270 310,1275 50,1140Z" />
      <path fill="url(#upland)" d="M168,32 L620,32 700,250 840,480 880,700 760,690 640,550 400,430 190,260Z M1010,880 L1200,1100 1180,1230 1050,1090Z M900,350 960,450 1160,580 1300,780 1200,800 1000,600 860,480Z" />
      <path fill="url(#flats)" d="M190,310 L400,440 620,540 760,710 900,720 1090,885 1160,1100 1180,1395 740,1395 600,1180 470,930 320,850 250,690 100,600 90,480Z" />
      <path d="M1090,32 H1362 V420 L1250,200Z" fill="#d6d6c0" />
      <g filter="url(#haze)">
        <Areas list={brushEast} fill="#b9bca2" />
        <path d="M960,760 L1060,700 1130,850 1060,840Z M700,60 L800,80 760,180 690,150Z M960,480 1040,400 1050,460Z" fill="#cdc9bc" />
      </g>
      <Areas list={hillParks} fill="#bccc8d" />
      <Areas list={parksEast} fill={PARK} />
      <Areas list={sandEast} fill={SAND} />
      <g clipPath="url(#hills)">
        <Trace $color="rgba(205,220,160,.7)" $width={4} d="M850,50 Q960,130 1000,200 T1140,370 M960,45 Q1040,150 1090,210 T1220,400 M1190,490 Q1250,560 1340,740 M1000,90 L1040,100 M1100,230 L1140,230 M1120,250 L1120,290" />
        <Trace $color="rgba(160,178,115,.5)" $width={7} d="M880,45 Q990,140 1030,200 T1170,380 M990,45 Q1080,140 1120,200 T1250,370 M1230,480 Q1290,560 1350,680" />
      </g>
      <Shade $strength={0.8}>
        <g clipPath="url(#hills)">
          <rect x="200" y="32" width="1162" height="1200" filter="url(#relief)" />
        </g>
      </Shade>
      <Areas list={waterEast} fill={WATER} />
      <Trace $color={WATER} $width={4} d="M83,470 L80,520 65,540 70,570 50,610 M0,1010 L60,1050 M85,1050 L130,1080 M90,1050 L85,1075 M108,1060 L100,1085 M150,1090 L185,1150 M190,1190 L240,1220 265,1255" />
      <Trace $color={WATER} d="M850,1160 L910,1100 M600,1230 L660,1220 710,1270 M540,1070 L600,1100 570,1140 M640,1370 L700,1320 740,1320 M810,1160 L825,1140 M265,1340 V1375 L300,1380 M360,1385 L400,1375" />
    </Tile>

    <Tile at={WEST}>
      <Shade $strength={0.8}>
        <g clipPath="url(#peaks)">
          <rect x="100" y="30" width="960" height="1510" filter="url(#reliefSoft)" />
        </g>
      </Shade>
    </Tile>

    <g fill="none" strokeLinejoin="round" strokeLinecap="round">
      {tiles.map((t, i) => (
        <Tile key={i} at={t.at}><Roads list={t.roads} color="#c6c1ba" extra={2} /></Tile>
      ))}
      {tiles.map((t, i) => (
        <Tile key={i} at={t.at}><Roads list={t.roads} color="#fff" extra={-0.4} /></Tile>
      ))}
      {tiles.map((t, i) => (
        <Tile key={i} at={t.at}><Roads list={t.freeways} color="#aeaaa5" extra={3} /></Tile>
      ))}
      {tiles.map((t, i) => (
        <Tile key={i} at={t.at}><Roads list={t.freeways} color="#fff" extra={0} /></Tile>
      ))}
      <g strokeLinecap="butt">
        <Tile at={BAY}>
          <Roads list={bridges} color="#758796" extra={3.4} />
          <Roads list={bridges} color="#fdfdfd" extra={0} />
        </Tile>
      </g>
    </g>

    {streets.map(([text, x1, y1, x2, y2]) => (
      <Street key={text + x1} text={text} x1={x1} y1={y1} x2={x2} y2={y2} />
    ))}
    <MapLabel $color="#5c5c5c">
      <textPath href="#macarthur" textLength="137" lengthAdjust="spacingAndGlyphs">MACARTHUR FWY</textPath>
    </MapLabel>
    {places.map(([text, x, y, w, size]) => (
      <MapLabel key={text + x} $size={size} $color="#757575" x={x} y={y} textLength={w} lengthAdjust="spacingAndGlyphs">
        {text}
      </MapLabel>
    ))}

    <RouteShield x={2485} y={700} />
    <RouteShield x={2534} y={727} />
    <path d="M2786,824 Q2796,828 2805,824 Q2814,828 2824,824 Q2830,845 2805,856 Q2780,845 2786,824Z" fill="#fff" stroke="#5c5c73" strokeWidth="2.5" />
    <path d="M2786,824 Q2796,828 2805,824 Q2814,828 2824,824 L2825,830 H2785Z" fill="#5c5c73" />
    <MapLabel $color="#555" $size={17} x="2805" y="846" textAnchor="middle">880</MapLabel>

    <MapLabel $size={35} $weight={600} $color="#111" x="2352" y="454" textLength="136" lengthAdjust="spacingAndGlyphs">Oakland</MapLabel>
    <MapLabel $size={39} $weight={600} $color="#111" x="1427" y="642" textLength="262" lengthAdjust="spacingAndGlyphs">San Francisco</MapLabel>

    <path
      d="M1667,587 L1647,550 C1644,545 1643,540 1643,534 A24,24 0 0 1 1691,534 C1691,540 1690,545 1687,550Z"
      fill="url(#pin)"
      stroke="#2e6c97"
      strokeWidth="1.8"
    />
    <path
      d="M1667,582 L1649,549 C1646,544 1645.5,540 1645.5,534 A21.5,21.5 0 0 1 1688.500,534 C1688.500,540 1688,544 1685,549Z"
      fill="none"
      stroke="#fff"
      strokeOpacity=".16"
      strokeWidth="2.5"
    />
    <circle cx="1667" cy="534" r="9.4" fill="#fff" stroke="#2e6ca5" strokeWidth="2" />
  </MapCanvas>
);

/* ---------- icons ---------- */

const Chevron = ({ top }) => (
  <ChevronIcon $top={top} width="16" height="12" viewBox="0 0 16 12">
    <path d="M2.2,2.8 L8,8.4 13.8,2.8" fill="none" stroke="#d1d1d1" strokeWidth="3" strokeLinecap="round" />
  </ChevronIcon>
);

const BrokenImage = () => (
  <svg width="32" height="32" viewBox="0 0 32 32">
    <path d="M1,1 H22 L31,10 V31 H1Z" fill="#c5d6f5" stroke="#a3a3a3" strokeWidth="1.6" />
    <path d="M1.8,31 Q8,20 16,20 Q22,20 26,24 L20,31Z" fill="#6fac4b" />
    <path d="M4,13 Q3,9 7,9 Q9,5 13,7 Q16,9 16,13Z" fill="#fff" />
    <path d="M22,1 V9 H31Z" fill="#fff" stroke="#a3a3a3" strokeWidth="1.4" />
    <path d="M13,32 L32,16 V23 L21,32Z" fill="#1d1d1d" />
    <path d="M1,31 H14 M21,31 H31 V24" fill="none" stroke="#a3a3a3" strokeWidth="1.4" />
  </svg>
);

const HelpIcon = () => (
  <svg width="33" height="33" viewBox="0 0 33 33">
    <circle cx="16.5" cy="16.3" r="14.2" fill="none" stroke="#d1d1d1" strokeWidth="4" />
    <path d="M11.6,12.9 Q12.6,9.2 16.6,9.2 Q21.6,9.4 21.6,13 Q21.6,15.2 18.6,16.6 Q16.6,17.6 16.6,19.6" fill="none" stroke="#d1d1d1" strokeWidth="4" />
    <rect x="14.2" y="21.2" width="4.9" height="4.6" rx=".6" fill="#d1d1d1" />
  </svg>
);

const UserIcon = () => (
  <svg width="26" height="31" viewBox="0 0 26 31">
    <circle cx="12.6" cy="7.4" r="6.8" fill="#d1d1d1" />
    <path d="M0.2,30.4 C0.2,21 4,16.4 8.6,16.2 H16.6 C21.4,16.4 25,21 25,30.4Z" fill="#d1d1d1" />
  </svg>
);

export default function App() {
  return (
    <Page>
      <GlobalStyle />
      <Navbar>
        <NavGroup>
          <MenuToggle aria-label="Toggle navigation">
            <MenuBar /><MenuBar /><MenuBar />
          </MenuToggle>
          <Brand><BrokenImage /><span>iPaaS hackathon</span></Brand>
        </NavGroup>
        <NavGroup>
          <HelpMenu><HelpIcon /><Chevron top={16} /></HelpMenu>
          <UserMenu><UserIcon /><UserName>John Smith</UserName><Chevron top={14} /></UserMenu>
        </NavGroup>
      </Navbar>

      <Content>
        <Card $height={748}>
          <CardTitle>Map View</CardTitle>
          <MapFrame>
            <CityMap />
            <ZoomControl>
              <ZoomButton $first aria-label="Zoom in">
                <svg width="26" height="26" viewBox="0 0 26 26"><path d="M.5,13 H25.5 M13,.5 V25.5" stroke="#000" strokeWidth="4.6" /></svg>
              </ZoomButton>
              <ZoomButton aria-label="Zoom out">
                <svg width="26" height="26" viewBox="0 0 26 26"><path d="M.5,13 H25.5" stroke="#000" strokeWidth="4.6" /></svg>
              </ZoomButton>
            </ZoomControl>
            <Attribution>Leaflet</Attribution>
          </MapFrame>
        </Card>

        <Columns>
          <Card $height={366} $pad="46px 40px 0">
            <Detail>Type:</Detail>
            <Detail>Lat:</Detail>
            <Detail>Lng:</Detail>
          </Card>

          <Card $height={716}>
            <CardTitle>Submit Additional Information</CardTitle>
            <Field>
              <Label>Type</Label>
              <ControlWrap>
                <Select defaultValue="a"><option value="a">Announcement</option></Select>
                <SelectArrows width="11" height="23" viewBox="0 0 11 23">
                  <path d="M0,9.3 L5.5,0 11,9.3Z M0,13.4 L5.5,22.6 11,13.4Z" fill="#333" />
                </SelectArrows>
              </ControlWrap>
            </Field>
            <Field>
              <Label>Title</Label>
              <Input defaultValue="Christina" />
            </Field>
            <Field>
              <Label>Text</Label>
              <ControlWrap>
                <TextArea defaultValue="Hello" />
                <ResizeGrip width="16" height="16" viewBox="0 0 16 16">
                  <path d="M1,15 L15,1 M9,15 L15,9" stroke="#555" strokeWidth="1.6" />
                </ResizeGrip>
              </ControlWrap>
            </Field>
            <Actions>
              <Button $width={104}>Cancel</Button>
              <Button $primary $width={80}>Save</Button>
            </Actions>
          </Card>
        </Columns>

        <Comments>
          <CommentsTitle>Latest Comments on :</CommentsTitle>
          <CommentList><Avatar /></CommentList>
        </Comments>
      </Content>
    </Page>
  );
}
